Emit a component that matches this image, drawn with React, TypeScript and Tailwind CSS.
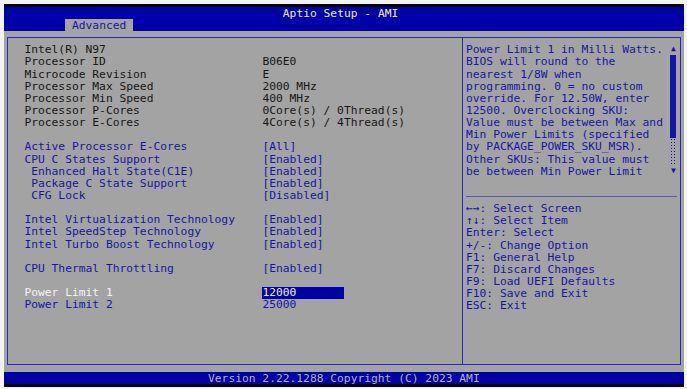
import React from "react";

type Line = {
  label?: string;
  value?: string;
  kind?: "info" | "opt" | "sel";
  indent?: boolean;
};

const leftRows: Line[] = [
  { label: "Intel(R) N97", kind: "info" },
  { label: "Processor ID", value: "B06E0", kind: "info" },
  { label: "Microcode Revision", value: "E", kind: "info" },
  { label: "Processor Max Speed", value: "2000 MHz", kind: "info" },
  { label: "Processor Min Speed", value: "400 MHz", kind: "info" },
  { label: "Processor P-Cores", value: "0Core(s) / 0Thread(s)", kind: "info" },
  { label: "Processor E-Cores", value: "4Core(s) / 4Thread(s)", kind: "info" },
  {},
  { label: "Active Processor E-Cores", value: "[All]", kind: "opt" },
  { label: "CPU C States Support", value: "[Enabled]", kind: "opt" },
  { label: "Enhanced Halt State(C1E)", value: "[Enabled]", kind: "opt", indent: true },
  { label: "Package C State Support", value: "[Enabled]", kind: "opt", indent: true },
  { label: "CFG Lock", value: "[Disabled]", kind: "opt", indent: true },
  {},
  { label: "Intel Virtualization Technology", value: "[Enabled]", kind: "opt" },
  { label: "Intel SpeedStep Technology", value: "[Enabled]", kind: "opt" },
  { label: "Intel Turbo Boost Technology", value: "[Enabled]", kind: "opt" },
  {},
  { label: "CPU Thermal Throttling", value: "[Enabled]", kind: "opt" },
  {},
  { label: "Power Limit 1", value: "12000", kind: "sel" },
  { label: "Power Limit 2", value: "25000", kind: "opt" },
];

const helpLines = [
  "Power Limit 1 in Milli Watts.",
  "BIOS will round to the",
  "nearest 1/8W when",
  "programming. 0 = no custom",
  "override. For 12.50W, enter",
  "12500. Overclocking SKU:",
  "Value must be between Max and",
  "Min Power Limits (specified",
  "by PACKAGE_POWER_SKU_MSR).",
  "Other SKUs: This value must",
  "be between Min Power Limit",
];

const keyLines = [
  "←→: Select Screen",
  "↑↓: Select Item",
  "Enter: Select",
  "+/-: Change Option",
  "F1: General Help",
  "F7: Discard Changes",
  "F9: Load UEFI Defaults",
  "F10: Save and Exit",
  "ESC: Exit",
];

function Row({ line }: { line: Line }) {
  if (!line.label) return <div className="h-[12.15px]" />;
  const labelColor =
    line.kind === "info" ? "text-[#161616]" : line.kind === "sel" ? "text-[#f4f4f4]" : "text-[#1616a2]";
  const valueColor = line.kind === "info" ? "text-[#161616]" : "text-[#1616a2]";
  return (
    <div className="flex h-[12.15px] leading-[12.15px]">
      <div className={`w-[238px] whitespace-pre ${labelColor} ${line.indent ? "pl-[6.8px]" : ""}`}>
        {line.label}
      </div>
      {line.kind === "sel" ? (
        <div className="w-[81.6px] bg-[#0000a8] text-[#f4f4f4] whitespace-pre">{line.value}</div>
      ) : (
        <div className={`whitespace-pre ${valueColor}`}>{line.value}</div>
      )}
    </div>
  );
}

export default function App() {
  return (
    <div
      className="w-[687px] h-[389px] bg-[#f3f3f3] pt-[4px] pl-[4px] overflow-hidden"
      style={{ fontFamily: '"DejaVu Sans Mono", "Liberation Mono", monospace' }}
    >
      <div className="w-[680px] bg-black py-[3px]">
        <div className="w-[680px] h-[376.65px] flex flex-col text-[11.295px] leading-[12.15px]">
          {/* title */}
          <div className="h-[12.15px] bg-[#0000a8] text-[#ececec] pl-[278.8px] pt-[1px] leading-[11.15px] whitespace-pre">
            Aptio Setup - AMI
          </div>
          {/* tabs */}
          <div className="h-[12.15px] bg-[#0000a8] pl-[61.2px]">
            <div className="w-[68px] h-full bg-[#a3a3a3] text-[#1616a2] px-[6.8px] pt-[1px] leading-[11.15px]">
              Advanced
            </div>
          </div>

          {/* body */}
          <div className="flex-1 bg-[#a3a3a3] px-[3.4px] py-[6.075px] flex">
            <div className="flex-1 flex border border-[#2a2ab4]">
              {/* left */}
              <div className="w-[455px] border-r border-[#2a2ab4] pl-[16px] pt-[5px]">
                <div className="pt-[1px]">
                  {leftRows.map((r, i) => (
                    <Row key={i} line={r} />
                  ))}
                </div>
              </div>

              {/* right */}
              <div className="flex-1 pl-[2.6px] pt-[5px] text-[#1616a2]">
                <div className="flex">
                  <div className="w-[204px] pt-[1px]">
                    {helpLines.map((l, i) => (
                      <div key={i} className="h-[12.15px] whitespace-pre">
                        {l}
                      </div>
                    ))}
                  </div>
                  <div className="w-[6.8px] flex flex-col items-center">
                    <div className="h-[12.15px] flex items-center justify-center text-[8px] leading-none">▲</div>
                    <div className="w-[6px] h-[82.4px] bg-[#1414a8]" />
                    <div className="w-[6px] h-[27px] bg-[radial-gradient(#1414a8_1px,transparent_1px)] bg-[length:3px_3px]" />
                    <div className="flex-1 flex items-center justify-center text-[8px] leading-none">▼</div>
                  </div>
                </div>
                <div className="h-[12.15px]" />
                <div className="h-[12.15px] flex items-center">
                  <div className="w-[211px] h-px bg-[#5656b4]" />
                </div>
                <div className="pt-[1px]">
                  {keyLines.map((l, i) => (
                    <div key={i} className="h-[12.15px] whitespace-pre">
                      {l}
                    </div>
                  ))}
                </div>
              </div>
            </div>
          </div>

          {/* footer */}
          <div className="h-[12.15px] bg-[#0000a8] text-[#b4b4b4] pl-[204px] pt-[1px] leading-[11.15px] whitespace-pre">
            Version 2.22.1288 Copyright (C) 2023 AMI
          </div>
        </div>
      </div>
    </div>
  );
}
